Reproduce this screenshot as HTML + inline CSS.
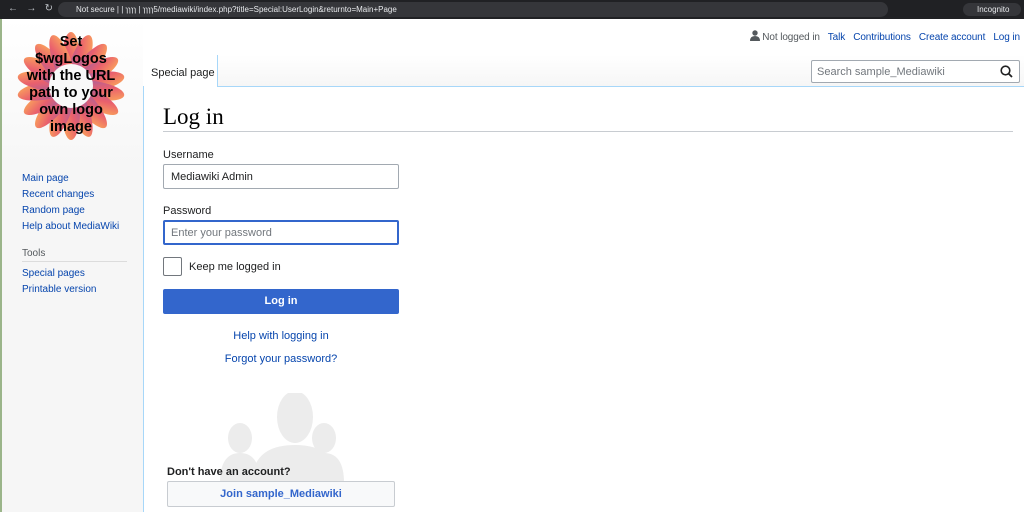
<!DOCTYPE html>
<html><head><meta charset="utf-8"><style>
*{box-sizing:border-box;margin:0;padding:0}
body{width:1024px;height:512px;overflow:hidden;font-family:"Liberation Sans",sans-serif;background:#fff;position:relative}
a{color:#0645ad;text-decoration:none}
.bar{position:absolute;left:0;top:0;width:1024px;height:19px;background:#202124;color:#bdc1c6;font-size:8px}
.url{position:absolute;left:58px;top:2px;width:830px;height:15px;background:#35363a;border-radius:8px;padding:3px 0 0 18px;color:#e8eaed}
.abs{position:absolute}
.side a{display:block;font-size:10px;position:absolute;left:22px}
.content{position:absolute;left:143px;top:86px;width:881px;height:426px;background:#fff;border-left:1px solid #a7d7f9;border-top:1px solid #a7d7f9}
.lbl{font-size:11px;color:#202122;position:absolute;left:163px}
.inp{position:absolute;left:163px;width:236px;height:25px;border:1px solid #a2a9b1;border-radius:2px;font-size:11px;padding:6px 7px;color:#202122;background:#fff}
</style></head><body>
<div class="bar">
<span class="abs" style="left:8px;top:3px;font-size:10px">←&nbsp;&nbsp;&nbsp;→&nbsp;&nbsp;&nbsp;↻</span>
<div class="url">Not secure | | ɿɿɿɿ | ɿɿɿɿ5/mediawiki/index.php?title=Special:UserLogin&amp;returnto=Main+Page</div>
<span class="abs" style="left:963px;top:3px;width:58px;height:13px;background:#35363a;border-radius:7px;color:#e8eaed;padding:2px 0 0 14px">Incognito</span>
</div>
<div class="abs" style="left:0;top:19px;width:143px;height:493px;background:linear-gradient(#fff 0,#f6f6f6 150px)"></div>
<div class="abs" style="left:0;top:19px;width:2px;height:493px;background:#9bb58a"></div>
<!-- logo -->
<svg class="abs" style="left:14px;top:30px" width="114" height="112" viewBox="0 0 114 112">
<defs><linearGradient id="g" x1="0" y1="1" x2="1" y2="0"><stop offset="0" stop-color="#7a3b9a"/><stop offset=".5" stop-color="#e63a4a"/><stop offset="1" stop-color="#ffa030"/></linearGradient></defs>
<g transform="translate(57,56)">
<g fill="url(#g)" opacity=".8">
<ellipse rx="9" ry="28" transform="rotate(0) translate(0,-26)"/><ellipse rx="9" ry="28" transform="rotate(20) translate(0,-26)"/><ellipse rx="9" ry="28" transform="rotate(40) translate(0,-26)"/><ellipse rx="9" ry="28" transform="rotate(60) translate(0,-26)"/><ellipse rx="9" ry="28" transform="rotate(80) translate(0,-26)"/><ellipse rx="9" ry="28" transform="rotate(100) translate(0,-26)"/><ellipse rx="9" ry="28" transform="rotate(120) translate(0,-26)"/><ellipse rx="9" ry="28" transform="rotate(140) translate(0,-26)"/><ellipse rx="9" ry="28" transform="rotate(160) translate(0,-26)"/><ellipse rx="9" ry="28" transform="rotate(180) translate(0,-26)"/><ellipse rx="9" ry="28" transform="rotate(200) translate(0,-26)"/><ellipse rx="9" ry="28" transform="rotate(220) translate(0,-26)"/><ellipse rx="9" ry="28" transform="rotate(240) translate(0,-26)"/><ellipse rx="9" ry="28" transform="rotate(260) translate(0,-26)"/><ellipse rx="9" ry="28" transform="rotate(280) translate(0,-26)"/><ellipse rx="9" ry="28" transform="rotate(300) translate(0,-26)"/><ellipse rx="9" ry="28" transform="rotate(320) translate(0,-26)"/><ellipse rx="9" ry="28" transform="rotate(340) translate(0,-26)"/>
</g><circle r="22" fill="#f8f8f8"/></g>
<g font-family="Liberation Sans" font-weight="bold" font-size="14.5" text-anchor="middle" fill="#000">
<text x="57" y="16">Set</text><text x="57" y="33">$wgLogos</text><text x="57" y="50">with the URL</text><text x="57" y="67">path to your</text><text x="57" y="84">own logo</text><text x="57" y="101">image</text></g>
</svg>
<div class="side">
<a style="top:173px">Main page</a><a style="top:189px">Recent changes</a><a style="top:205px">Random page</a><a style="top:221px">Help about MediaWiki</a>
<div class="abs" style="left:22px;top:248px;font-size:10px;color:#54595d">Tools</div>
<div class="abs" style="left:22px;top:261px;width:105px;height:1px;background:#dcdcdc"></div>
<a style="top:268px">Special pages</a><a style="top:284px">Printable version</a>
</div>
<!-- top personal -->
<div class="abs" style="top:30px;right:4px;font-size:10px;white-space:nowrap;letter-spacing:-0.1px">
<svg width="10" height="11" viewBox="0 0 10 11" style="vertical-align:-1px"><circle cx="5" cy="3" r="2.7" fill="#54595d"/><path d="M0 11 Q0 6 5 6 Q10 6 10 11Z" fill="#54595d"/></svg>
<span style="color:#54595d"> Not logged in</span>&nbsp;&nbsp; <a>Talk</a>&nbsp;&nbsp; <a>Contributions</a>&nbsp;&nbsp; <a>Create account</a>&nbsp;&nbsp; <a>Log in</a></div>
<!-- tabs -->
<div class="abs" style="left:144px;top:55px;width:880px;height:31px;background:linear-gradient(#fff,#f6f6f6)"></div>
<div class="abs" style="left:144px;top:55px;width:74px;height:32px;background:#fff;border-right:1px solid #a7d7f9;font-size:11px;color:#202122;padding:12px 0 0 7px;z-index:2">Special page</div>
<div class="abs" style="left:811px;top:60px;width:209px;height:23px;background:#fff;border:1px solid #a2a9b1;border-radius:2px;font-size:11px;color:#72777d;padding:5px 5px">Search sample_Mediawiki
<svg class="abs" style="right:6px;top:4px" width="13" height="13" viewBox="0 0 13 13"><circle cx="5.5" cy="5.5" r="4.3" fill="none" stroke="#202122" stroke-width="1.6"/><path d="M8.5 8.5L12 12" stroke="#202122" stroke-width="1.8"/></svg></div>
<div class="content"></div>
<div class="abs" style="left:163px;top:104px;font-family:'Liberation Serif',serif;font-size:23px;color:#000">Log in</div>
<div class="abs" style="left:163px;top:131px;width:850px;height:1px;background:#c8ccd1"></div>
<div class="lbl" style="top:149px">Username</div>
<div class="inp" style="top:164px">Mediawiki Admin</div>
<div class="lbl" style="top:205px">Password</div>
<div class="inp" style="top:220px;border:2px solid #36c;color:#72777d;padding:5px 6px">Enter your password</div>
<div class="abs" style="left:163px;top:257px;width:19px;height:19px;border:1px solid #72777d;border-radius:2px;background:#fff"></div>
<div class="abs" style="left:189px;top:261px;font-size:11px;color:#202122">Keep me logged in</div>
<div class="abs" style="left:163px;top:289px;width:236px;height:25px;background:#36c;border-radius:2px;color:#fff;font-size:11px;font-weight:bold;text-align:center;padding-top:6px">Log in</div>
<div class="abs" style="left:163px;top:330px;width:236px;text-align:center;font-size:11px"><a>Help with logging in</a></div>
<div class="abs" style="left:163px;top:353px;width:236px;text-align:center;font-size:11px"><a>Forgot your password?</a></div>
<svg class="abs" style="left:218px;top:393px" width="140" height="90" viewBox="0 0 140 90" fill="#ececec">
<ellipse cx="22" cy="45" rx="12" ry="15"/><path d="M2 90 Q2 60 22 60 Q42 60 42 90Z"/>
<ellipse cx="106" cy="45" rx="12" ry="15"/><path d="M86 90 Q86 60 106 60 Q126 60 126 90Z"/>
<ellipse cx="77" cy="24" rx="18" ry="26"/><path d="M34 90 Q34 52 77 52 Q120 52 120 90Z"/>
</svg>
<div class="abs" style="left:167px;top:466px;font-size:11px;font-weight:bold;color:#202122">Don't have an account?</div>
<div class="abs" style="left:167px;top:481px;width:228px;height:26px;background:#f8f9fa;border:1px solid #c8ccd1;border-radius:2px;text-align:center;font-size:11px;font-weight:bold;padding-top:6px;color:#36c">Join sample_Mediawiki</div>
</body></html>
